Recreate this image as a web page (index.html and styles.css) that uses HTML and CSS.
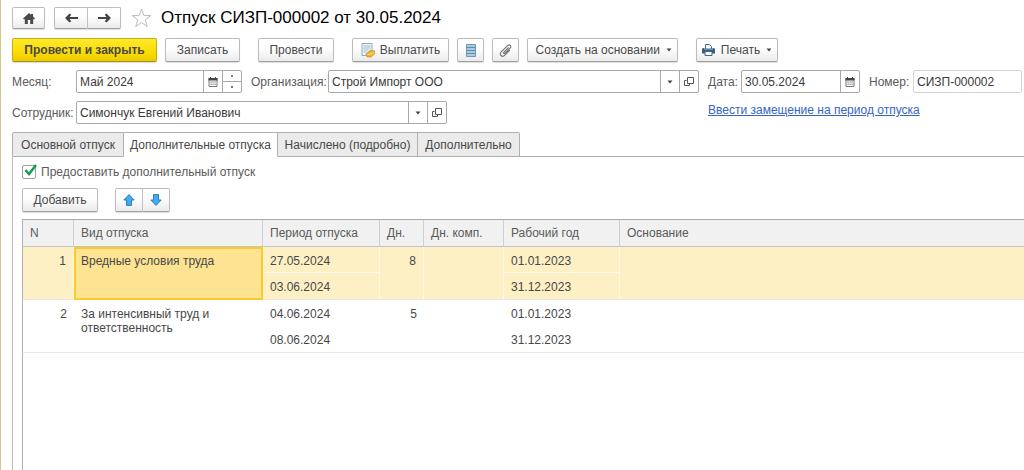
FILE: index.html
```html
<!DOCTYPE html>
<html lang="ru">
<head>
<meta charset="utf-8">
<title>Отпуск СИЗП-000002 от 30.05.2024</title>
<link rel="stylesheet" href="styles.css">
</head>
<body>
<svg class="defs" aria-hidden="true">
  <symbol id="calendar" viewBox="0 0 10 10"><path d="M1 1.500h8v8H1z" fill="#fff" stroke="#777"/><path d="M.5 1h9v2.500h-9zM2 0h1v2H2zM7 0h1v2H7z" fill="#444"/><path d="M2.500 5h1.200M4.500 5h1.200M6.500 5h1.200M2.500 7.200h1.200M4.500 7.200h1.200M6.500 7.200h1.200" stroke="#555"/></symbol>
  <symbol id="open" viewBox="0 0 10 10"><path d="M3.500.5h6v6h-6z" fill="none" stroke="#555"/><path d="M2.500 3.500h-2v5h5v-1.500" fill="none" stroke="#555"/></symbol>
  <symbol id="caret" viewBox="0 0 6 4"><path d="M.5.500h5L3 3.500z" fill="#444"/></symbol>
  <symbol id="arrow-up" viewBox="0 0 12 12"><path d="M6 .6 11.200 6H8.500v5.400h-5V6H.8z" fill="#41aaf0" stroke="#2a7fb8"/></symbol>
</svg>
<main class="window">
  <header class="title-row">
    <button class="btn nav home" aria-label="Домой"><svg width="12" height="11" viewBox="0 0 12 11"><path d="M6 0 8 1.800V1h2v2.600L12 5.600l-1 1-.8-.7V11H7.200V7H4.800v4H1.800V5.900l-.8.7-1-1z" fill="#4a4a4a"/></svg></button>
    <div class="group history">
      <button class="btn nav" aria-label="Назад"><svg width="13" height="10" viewBox="0 0 13 10"><path d="M0 5 4.500.6 6.300 1.800 4.500 4H13v2H4.500l1.800 2.200L4.500 9.400z" fill="#444"/></svg></button>
      <button class="btn nav" aria-label="Вперёд"><svg width="13" height="10" viewBox="0 0 13 10"><path d="M13 5 8.500.6 6.700 1.800 8.500 4H0v2h8.500L6.700 8.200l1.800 1.200z" fill="#444"/></svg></button>
    </div>
    <button class="star" aria-label="В избранное"><svg width="21" height="20" viewBox="0 0 21 20"><path d="M10.500 1.200l2.300 6.200 6.900.2-5.400 4.200 1.900 6.700-5.700-3.900-5.700 3.900 1.900-6.700L1.300 7.600l6.900-.2z" fill="#fff" stroke="#b8bcc0"/></svg></button>
    <h1 class="title">Отпуск СИЗП-000002 от 30.05.2024</h1>
  </header>

  <div class="toolbar">
    <button class="btn primary">Провести и закрыть</button>
    <button class="btn save">Записать</button>
    <button class="btn post">Провести</button>
    <button class="btn pay"><svg width="14" height="15" viewBox="0 0 14 15"><path d="M1 .5h10v12H1z" fill="#e9f3f8" stroke="#91adbd"/><path d="M2.500 3h7M2.500 5h7M2.500 7h5M2.500 9h3" stroke="#9fc2d6"/><path d="M5 11l4-3.500 4.500.3V11L10 14H6z" fill="#f0b22d" stroke="#c98a1a" stroke-width=".7"/><path d="M6.500 11.500 10 11l3-2" fill="none" stroke="#ffe08a"/></svg>Выплатить</button>
    <button class="btn icon" aria-label="Список"><svg width="10" height="13" viewBox="0 0 10 13"><path d="M.5.500h9v12h-9z" fill="#a9cce2" stroke="#6f97b3"/><path d="M1 3.500h8M1 6.500h8M1 9.500h8" stroke="#5f8aa8"/></svg></button>
    <button class="btn icon" aria-label="Файлы"><svg width="13" height="13" viewBox="0 0 13 13"><path d="M9.500 3.500 4.800 8.300c-.8.800.3 1.900 1.100 1.100l5.200-5.200c2-2-.7-4.500-2.600-2.600L2.200 7.900c-2.600 2.600 1 5.800 3.400 3.500l5.200-5.200" fill="none" stroke="#777" stroke-width="1.200"/></svg></button>
    <button class="btn create">Создать на основании<svg width="6" height="4"><use href="#caret"/></svg></button>
    <button class="btn print"><svg width="13" height="12" viewBox="0 0 13 12"><path d="M3.500.5h4l2 2V5h-6z" fill="#fff" stroke="#40698a"/><path d="M1 4h1.500v1.500h8V4H12l1 1v4.500H0V5z" fill="#315f85"/><path d="M3 7.500h7v4H3z" fill="#fff" stroke="#40698a"/></svg>Печать<svg width="6" height="4"><use href="#caret"/></svg></button>
  </div>

  <div class="fields">
    <div class="fields-main">
      <div class="line">
        <label class="lead" for="month">Месяц:</label>
        <div class="field month"><input id="month" value="Май 2024"><button aria-label="Календарь"><svg width="10" height="10"><use href="#calendar"/></svg></button><span class="spin"><button aria-label="Больше"><i></i></button><button aria-label="Меньше"><i></i></button></span></div>
        <label class="org-label" for="org">Организация:</label>
        <div class="field org"><input id="org" value="Строй Импорт ООО"><button aria-label="Выбрать"><svg width="6" height="4"><use href="#caret"/></svg></button><button aria-label="Открыть"><svg width="10" height="10"><use href="#open"/></svg></button></div>
      </div>
      <div class="line">
        <label class="lead" for="employee">Сотрудник:</label>
        <div class="field employee"><input id="employee" value="Симончук Евгений Иванович"><button aria-label="Выбрать"><svg width="6" height="4"><use href="#caret"/></svg></button><button aria-label="Открыть"><svg width="10" height="10"><use href="#open"/></svg></button></div>
      </div>
    </div>
    <div class="fields-side">
      <div class="line">
        <label class="date-label" for="date">Дата:</label>
        <div class="field date"><input id="date" value="30.05.2024"><button aria-label="Календарь"><svg width="10" height="10"><use href="#calendar"/></svg></button></div>
        <label class="number-label" for="number">Номер:</label>
        <div class="field number"><input id="number" value="СИЗП-000002"></div>
      </div>
      <div class="line link-line"><a class="link" href="#">Ввести замещение на период отпуска</a></div>
    </div>
  </div>

  <nav class="tabs" role="tablist">
    <button class="tab tab-1" role="tab">Основной отпуск</button>
    <button class="tab tab-2 active" role="tab" aria-selected="true">Дополнительные отпуска</button>
    <button class="tab tab-3" role="tab">Начислено (подробно)</button>
    <button class="tab tab-4" role="tab">Дополнительно</button>
  </nav>
  <section class="panel">
    <div class="check"><input type="checkbox" id="grant" checked><label for="grant">Предоставить дополнительный отпуск</label><svg class="tick" width="13" height="13" viewBox="0 0 13 13"><path d="M1.500 6 5 10 12 1" fill="none" stroke="#0f9d4c" stroke-width="2.400"/></svg></div>
    <div class="commands">
      <button class="btn add">Добавить</button>
      <div class="group move">
        <button class="btn" aria-label="Вверх"><svg width="12" height="12"><use href="#arrow-up"/></svg></button>
        <button class="btn" aria-label="Вниз"><svg class="down" width="12" height="12"><use href="#arrow-up"/></svg></button>
      </div>
    </div>
    <table class="grid">
      <colgroup><col class="c-n"><col class="c-kind"><col class="c-period"><col class="c-days"><col class="c-comp"><col class="c-year"><col></colgroup>
      <thead><tr><th>N</th><th>Вид отпуска</th><th>Период отпуска</th><th>Дн.</th><th>Дн. комп.</th><th>Рабочий год</th><th>Основание</th></tr></thead>
      <tbody>
        <tr class="selected"><td class="num">1</td><td class="current">Вредные условия труда</td><td class="pair"><div>27.05.2024</div><div>03.06.2024</div></td><td class="num">8</td><td></td><td class="pair"><div>01.01.2023</div><div>31.12.2023</div></td><td></td></tr>
        <tr><td class="num">2</td><td>За интенсивный труд и ответственность</td><td class="pair"><div>04.06.2024</div><div>08.06.2024</div></td><td class="num">5</td><td></td><td class="pair"><div>01.01.2023</div><div>31.12.2023</div></td><td></td></tr>
      </tbody>
    </table>
  </section>
</main>
</body>
</html>
```
FILE: styles.css
```css
* { box-sizing: border-box; }
body {
  margin: 0;
  background: #fff;
  color: #484848;
  font: 12px/14px "Liberation Sans", Arial, sans-serif;
}
button, input { font: inherit; color: inherit; margin: 0; }
button { padding: 0; cursor: pointer; }
svg { display: block; flex: none; }
.defs { display: none; }

.window {
  display: flex;
  flex-direction: column;
  min-height: 100vh;
  padding: 7px 0 0 11px;
  border-left: 1px solid #d3c68c;
  overflow: hidden;
}

.btn {
  display: flex;
  align-items: center;
  justify-content: center;
  height: 24px;
  border: 1px solid #bcbcbc;
  border-bottom-color: #a0a0a0;
  border-radius: 2px;
  background: linear-gradient(#fff 40%, #ebebeb);
  box-shadow: 0 1px 1px #ddd;
  white-space: nowrap;
}
.group { display: flex; }
.group .btn { flex: 1; }
.group .btn:first-child { border-radius: 2px 0 0 2px; }
.group .btn:last-child { border-left: 0; border-radius: 0 2px 2px 0; }

.title-row { display: flex; align-items: center; height: 22px; }
.nav { height: 22px; }
.home { width: 33px; margin-right: 9px; }
.history { width: 67px; margin-right: 10px; }
.star { border: 0; background: none; margin-right: 9px; }
.title {
  margin: 0;
  color: #000;
  font-size: 17px;
  line-height: 22px;
  font-weight: normal;
  white-space: nowrap;
}

.toolbar { display: flex; gap: 8px; margin-top: 9px; }
.primary {
  width: 145px;
  border-color: #c8ab10;
  border-bottom-color: #a88f10;
  background: linear-gradient(#ffe92f, #fbdc00 60%, #eccb00);
  font-weight: bold;
}
.save { width: 75px; }
.post { width: 76px; margin-left: 10px; }
.pay { width: 97px; margin-left: 10px; gap: 5px; }
.icon { width: 27px; }
.create { width: 151px; gap: 6px; justify-content: flex-end; padding-right: 5px; }
.print { width: 82px; margin-left: 10px; gap: 6px; }

.fields { display: flex; gap: 9px; margin-top: 8px; padding-right: 2px; }
.fields-main { flex: 1; min-width: 0; }
.fields-main, .fields-side { display: flex; flex-direction: column; gap: 8px; }
.line { display: flex; align-items: center; height: 23px; color: #5a5a5a; white-space: nowrap; }
.lead { width: 64px; }
.org-label { width: 77px; margin-left: 9px; }
.date-label { width: 33px; }
.number-label { width: 44px; margin-left: 9px; }
.field {
  display: flex;
  height: 23px;
  border: 1px solid #a9a9a9;
  border-radius: 2px;
  background: #fff;
  color: #3a3a3a;
}
.field input {
  flex: 1;
  min-width: 0;
  padding: 0 3px;
  border: 0;
  background: none;
  outline: 0;
}
.field button {
  display: flex;
  align-items: center;
  justify-content: center;
  width: 19px;
  border: 0;
  border-left: 1px solid #a9a9a9;
  background: none;
}
.month { width: 166px; }
.org { flex: 1; }
.employee { width: 371px; }
.date { width: 119px; }
.number { width: 109px; border-color: #d5d5d5; }
.spin { display: flex; flex-direction: column; }
.field .spin button { flex: 1; }
.field .spin button + button { border-top: 1px solid #a9a9a9; }
.spin i { width: 2px; height: 2px; background: #777; }
.link-line { height: 18px; }
.link { color: #3565c0; }

.tabs { display: flex; margin-top: 8px; }
.tab {
  height: 25px;
  border: 1px solid #b0b0b0;
  border-left-width: 0;
  background: #ebebeb;
  white-space: nowrap;
}
.tab:first-child { border-left-width: 1px; border-top-left-radius: 2px; }
.tab:last-child { border-top-right-radius: 2px; }
.tab.active { border-bottom-color: #fff; background: #fff; }
.tab-1 { width: 112px; }
.tab-2 { width: 154px; }
.tab-3 { width: 140px; }
.tab-4 { width: 102px; }
.tabs::after { content: ""; flex: 1; border-bottom: 1px solid #b0b0b0; }

.panel {
  flex: 1;
  display: flex;
  flex-direction: column;
  padding: 8px 0 0 9px;
  border-left: 1px solid #b9b9b9;
}
.check { position: relative; display: flex; align-items: center; gap: 5px; height: 14px; color: #5a5a5a; }
.check input {
  appearance: none;
  width: 14px;
  height: 14px;
  border: 1px solid #a0a0a0;
  border-radius: 2px;
}
.tick { position: absolute; left: 2px; top: -1px; pointer-events: none; }
.commands { display: flex; gap: 17px; margin: 9px 0 7px; }
.add { width: 76px; }
.move { width: 55px; }
.down { transform: rotate(180deg); }

.grid {
  width: 100%;
  table-layout: fixed;
  border-collapse: separate;
  border-spacing: 0;
  border-top: 1px solid #a9a9a9;
}
.c-n { width: 52px; }
.c-kind { width: 189px; }
.c-period { width: 117px; }
.c-days { width: 44px; }
.c-comp { width: 80px; }
.c-year { width: 116px; }
.grid th {
  height: 27px;
  padding: 0 7px;
  border-right: 1px solid #d0d0d0;
  border-bottom: 1px solid #c4c4c4;
  background: #f1f1f1;
  color: #5a5a5a;
  font-weight: normal;
  text-align: left;
}
.grid td {
  height: 52px;
  padding: 7px 7px 0;
  border-bottom: 1px solid #e8e8e8;
  vertical-align: top;
}
.grid .num { text-align: right; }
.grid .pair { padding: 0; }
.pair div { height: 26px; padding: 7px 7px 0; }
.selected td { border-right: 1px solid #fff8e2; background: #fdf0c4; }
.selected .pair div:first-child { border-bottom: 1px solid #fffaf0; }
.grid .current {
  padding: 5px 5px 0;
  border: 2px solid #fbcb2c;
  background: #fee492;
}
.grid th:last-child, .grid td:last-child { border-right: 0; }
.grid th:first-child, .grid td:first-child { border-left: 1px solid #b0b0b0; }
.panel::after { content: ""; flex: 1; border-left: 1px solid #b0b0b0; }
```
